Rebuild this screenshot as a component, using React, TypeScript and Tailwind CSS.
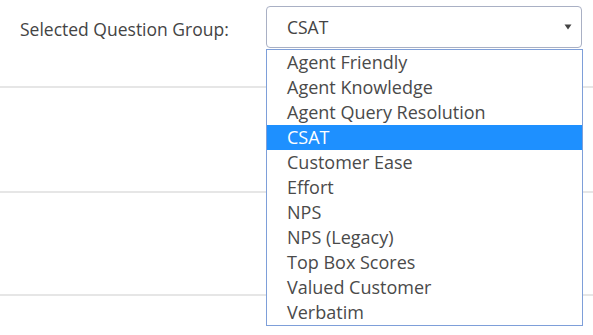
const groups = [
  'Agent Friendly',
  'Agent Knowledge',
  'Agent Query Resolution',
  'CSAT',
  'Customer Ease',
  'Effort',
  'NPS',
  'NPS (Legacy)',
  'Top Box Scores',
  'Valued Customer',
  'Verbatim',
];

export default function App() {
  const selected = 'CSAT';
  return (
    <div className="relative h-[335px] w-[593px] overflow-hidden bg-white font-['Open_Sans',sans-serif] text-[#444]">
      {/* header row */}
      <div className="flex h-[86px] items-start">
        <div className="ml-[20px] mt-[16px] w-[246px] text-[17.5px] leading-[26px]">Selected Question Group:</div>
        <div className="mt-[6px] flex h-[42px] w-[316px] items-center justify-between rounded-[4px] border border-[#a9b0c4] pl-[20px] pr-[9px]">
          <span className="text-[17.5px] text-[#444]">{selected}</span>
          <svg width="8" height="6" viewBox="0 0 8 6">
            <path d="M0.5 0.5 L7.5 0.5 L4 5.5 Z" fill="#444" />
          </svg>
        </div>
      </div>
      <div className="h-[2px] bg-[#e6e6e6]" />
      <div className="h-[103px]" />
      <div className="h-[2px] bg-[#e6e6e6]" />
      <div className="h-[101px]" />
      <div className="h-[2px] bg-[#e6e6e6]" />

      {/* open dropdown list */}
      <ul className="absolute left-[266px] top-[49px] w-[317px] border border-[#7e9fd9] bg-white text-[18px]">
        {groups.map((g) => (
          <li
            key={g}
            className={
              g === selected
                ? 'h-[25px] bg-[#1e90ff] pl-[20px] leading-[25px] text-white'
                : 'h-[25px] pl-[20px] leading-[25px] text-[#4a4a4a]'
            }
          >
            {g}
          </li>
        ))}
      </ul>
    </div>
  );
}
